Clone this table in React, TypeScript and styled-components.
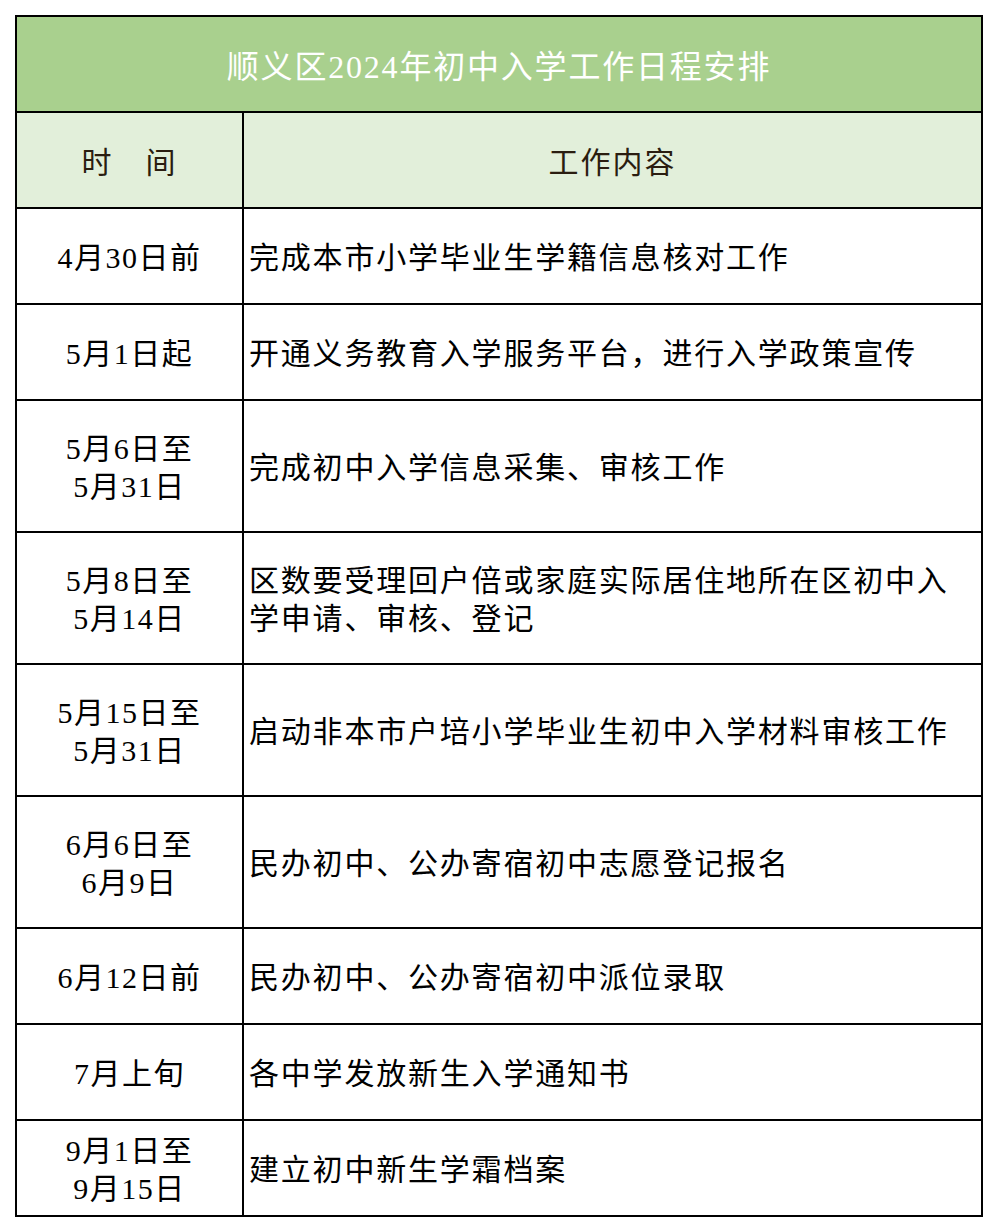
import React from 'react';
import styled, { createGlobalStyle } from 'styled-components';

const GlobalStyle = createGlobalStyle`
  body {
    margin: 0;
    background: #ffffff;
    font-family: 'Liberation Serif', 'Noto Sans CJK SC', serif;
  }
`;

const Page = styled.div`
  padding: 15px 0 0 15px;
`;

const Table = styled.table`
  width: 968px;
  border-collapse: collapse;
  border: 2px solid #000;
  table-layout: fixed;
  color: #000;
`;

const TitleCell = styled.td`
  height: 94px;
  background: #a9d08e;
  color: #ffffff;
  font-size: 32px;
  letter-spacing: 1.8px;
  text-align: center;
  border: 2px solid #000;
  padding: 0;
`;

const HeadCell = styled.td`
  height: 94px;
  background: #e2efda;
  color: #2a1d10;
  font-size: 30px;
  letter-spacing: 2px;
  text-align: center;
  border: 2px solid #000;
  padding: 0;
`;

const DateCell = styled.td<{ $tall?: boolean }>`
  height: ${(p) => (p.$tall ? 126 : 90)}px;
  font-size: 30px;
  line-height: 38px;
  letter-spacing: 1.5px;
  text-align: center;
  border: 2px solid #000;
  padding: 4px 0 0;
`;

const WorkCell = styled.td`
  font-size: 30px;
  line-height: 38px;
  letter-spacing: 1.8px;
  text-align: left;
  border: 2px solid #000;
  padding: 4px 20px 0 5px;
`;

const Line = styled.div``;

const rows: { date: string[]; work: string }[] = [
  { date: ['4月30日前'], work: '完成本市小学毕业生学籍信息核对工作' },
  { date: ['5月1日起'], work: '开通义务教育入学服务平台，进行入学政策宣传' },
  { date: ['5月6日至', '5月31日'], work: '完成初中入学信息采集、审核工作' },
  { date: ['5月8日至', '5月14日'], work: '区数要受理回户倍或家庭实际居住地所在区初中入学申请、审核、登记' },
  { date: ['5月15日至', '5月31日'], work: '启动非本市户培小学毕业生初中入学材料审核工作' },
  { date: ['6月6日至', '6月9日'], work: '民办初中、公办寄宿初中志愿登记报名' },
  { date: ['6月12日前'], work: '民办初中、公办寄宿初中派位录取' },
  { date: ['7月上旬'], work: '各中学发放新生入学通知书' },
  { date: ['9月1日至', '9月15日'], work: '建立初中新生学霜档案' },
];

function App(): React.ReactElement {
  return (
    <Page>
      <GlobalStyle />
      <Table>
        <colgroup>
          <col style={{ width: 227 }} />
          <col />
        </colgroup>
        <tbody>
          <tr>
            <TitleCell colSpan={2}>顺义区2024年初中入学工作日程安排</TitleCell>
          </tr>
          <tr>
            <HeadCell>时　间</HeadCell>
            <HeadCell>工作内容</HeadCell>
          </tr>
          {rows.map((r, i) => {
            const tall = r.date.length > 1 && i !== rows.length - 1;
            return (
              <tr key={i}>
                <DateCell $tall={tall}>
                  {r.date.map((d) => (
                    <Line key={d}>{d}</Line>
                  ))}
                </DateCell>
                <WorkCell>{r.work}</WorkCell>
              </tr>
            );
          })}
        </tbody>
      </Table>
    </Page>
  );
}

export default App;
